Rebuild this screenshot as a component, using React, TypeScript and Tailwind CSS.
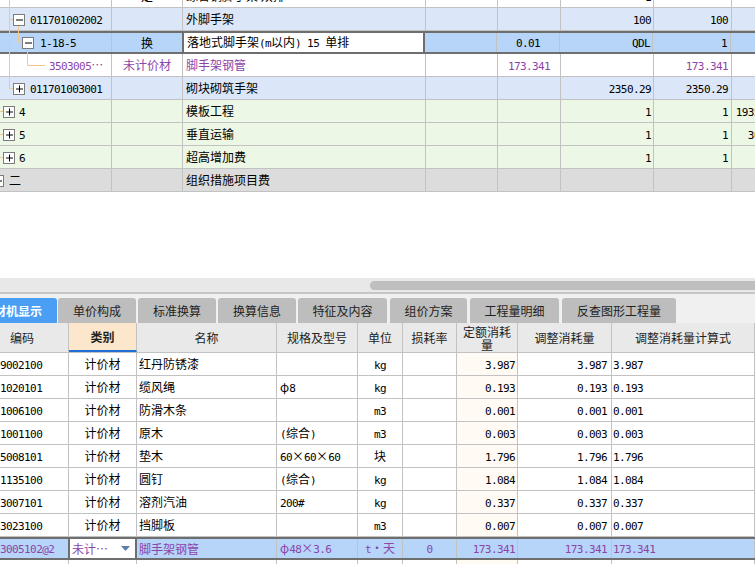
import React from "react";

const PURPLE = "text-[#8c44a8]";

const M = ({ children, className = "" }: { children: React.ReactNode; className?: string }) => (
  <span className={"font-['DejaVu_Sans_Mono'] text-[11px] tracking-[-0.6px] " + className}>{children}</span>
);

const TW = ["w-[112px]", "w-[71px]", "w-[243px]", "w-[72px]", "w-[63px]", "w-[93px]", "w-[78px]", "w-[55px]"];
const TA = [
  "justify-start",
  "justify-center",
  "justify-start pl-[3px]",
  "justify-center",
  "justify-center",
  "justify-end pr-[2px]",
  "justify-end pr-[3px]",
  "justify-end pr-[2px]",
];

type TopRowProps = {
  bg: string;
  cells: React.ReactNode[];
  pl0?: string;
  selected?: boolean;
  color?: string;
};

function TopRow({ bg, cells, pl0 = "", selected = false, color = "text-black" }: TopRowProps) {
  return (
    <div
      className={
        "flex h-[23px] shrink-0 " +
        bg +
        " " +
        color +
        " " +
        (selected ? "border-y-2 border-[#6e6e6e]" : "border-b border-[#c2c2c2]")
      }
    >
      {TW.map((w, i) => {
        const edit = selected && i === 2;
        return (
          <div
            key={i}
            className={
              "shrink-0 h-full flex items-center overflow-hidden whitespace-pre leading-none " +
              w +
              " " +
              TA[i] +
              " " +
              (i === 0 ? pl0 + " " : "") +
              (edit
                ? "bg-white border-x-2 border-[#6e6e6e] -ml-[1px]"
                : "border-r border-[#c2c2c2]")
            }
          >
            <span>{cells[i]}</span>
          </div>
        );
      })}
    </div>
  );
}

const Box = ({ x, y, plus }: { x: number; y: number; plus?: boolean }) => (
  <g>
    <rect x={x + 0.5} y={y + 0.5} width={11} height={11} fill="#fff" stroke="#7c7c7c" />
    <line x1={x + 3} y1={y + 6} x2={x + 10} y2={y + 6} stroke="#000" />
    {plus && <line x1={x + 6.5} y1={y + 2.5} x2={x + 6.5} y2={y + 9.5} stroke="#000" />}
  </g>
);

function TreeOverlay() {
  const c = "#f3c68c";
  return (
    <svg className="absolute left-0 top-0 pointer-events-none" width={60} height={192}>
      <line x1={9.5} y1={0} x2={9.5} y2={88.5} stroke={c} />
      <line x1={9.5} y1={19.5} x2={13} y2={19.5} stroke={c} />
      <line x1={9.5} y1={88.5} x2={13} y2={88.5} stroke={c} />
      <line x1={18.5} y1={25} x2={18.5} y2={42.5} stroke={c} />
      <line x1={18.5} y1={42.5} x2={22} y2={42.5} stroke={c} />
      <line x1={27.5} y1={48} x2={27.5} y2={65.5} stroke={c} />
      <line x1={27.5} y1={65.5} x2={45} y2={65.5} stroke={c} />
      <line x1={0} y1={111.5} x2={3} y2={111.5} stroke={c} />
      <line x1={0} y1={134.5} x2={3} y2={134.5} stroke={c} />
      <line x1={0} y1={157.5} x2={3} y2={157.5} stroke={c} />
      <Box x={13} y={14} />
      <Box x={22} y={37} />
      <Box x={13} y={83} plus />
      <Box x={3} y={106} plus />
      <Box x={3} y={129} plus />
      <Box x={3} y={152} plus />
      <Box x={-8} y={175} plus />
    </svg>
  );
}

const BW = ["w-[93px]", "w-[68px]", "w-[140px]", "w-[81px]", "w-[45px]", "w-[54px]", "w-[61px]", "w-[94px]", "w-[143px]"];
const BA = [
  "justify-start pl-[24px]",
  "justify-center",
  "justify-start pl-[2px]",
  "justify-start pl-[3px]",
  "justify-center",
  "justify-center",
  "justify-end pr-[2px]",
  "justify-end pr-[4px]",
  "justify-start pl-[1px]",
];

const materials: [string, string, React.ReactNode, string, string][] = [
  ["9002100", "红丹防锈漆", "", "kg", "3.987"],
  ["1020101", "缆风绳", <>φ<M>8</M></>, "kg", "0.193"],
  ["1006100", "防滑木条", "", "m3", "0.001"],
  ["1001100", "原木", <><M>(</M>综合<M>)</M></>, "m3", "0.003"],
  ["5008101", "垫木", <><M>60</M>×<M>60</M>×<M>60</M></>, "块", "1.796"],
  ["1135100", "圆钉", <><M>(</M>综合<M>)</M></>, "kg", "1.084"],
  ["3007101", "溶剂汽油", <M>200#</M>, "kg", "0.337"],
  ["3023100", "挡脚板", "", "m3", "0.007"],
];

function BottomRow({ cells, selected = false }: { cells: React.ReactNode[]; selected?: boolean }) {
  return (
    <div
      className={
        "flex h-[23px] shrink-0 " +
        (selected ? "bg-[#b6d5f8] border-y-2 border-[#6e6e6e] " + PURPLE : "bg-white border-b border-[#c2c2c2] text-black")
      }
    >
      {BW.map((w, i) => {
        const edit = selected && i === 1;
        return (
          <div
            key={i}
            className={
              "shrink-0 h-full flex items-center overflow-hidden whitespace-pre leading-none " +
              w +
              " " +
              BA[i] +
              " " +
              (edit
                ? "bg-white border-x-2 border-[#6e6e6e] -ml-[1px] w-[69px]"
                : "border-r border-[#c2c2c2] ") +
              (i === 6 && !selected ? " bg-[#fffaf3]" : "")
            }
          >
            {edit ? cells[i] : <span>{cells[i]}</span>}
          </div>
        );
      })}
    </div>
  );
}

const tabs: [string, string][] = [
  ["单价构成", "ml-[1px] w-[78px]"],
  ["标准换算", "ml-[2px] w-[78px]"],
  ["换算信息", "ml-[2px] w-[78px]"],
  ["特征及内容", "ml-[2px] w-[89px]"],
  ["组价方案", "ml-[3px] w-[77px]"],
  ["工程量明细", "ml-[3px] w-[89px]"],
  ["反查图形工程量", "ml-[3px] w-[114px]"],
];

export default function App() {
  return (
    <div className="w-[755px] h-[564px] overflow-hidden bg-white font-['Noto_Sans_CJK_SC',sans-serif] text-[12px] text-black flex flex-col">
      {/* top tree table */}
      <div className="relative h-[192px] shrink-0 overflow-hidden">
        <div className="flex flex-col -mt-[15px]">
          <TopRow
            bg="bg-white"
            cells={["", "定", "综合钢脚手架 双排", "", "", <M>1</M>, "", ""]}
          />
          <TopRow
            bg="bg-[#dbe7f9]"
            pl0="pl-[30px]"
            cells={[<M>011701002002</M>, "", "外脚手架", "", "", <M>100</M>, <M>100</M>, ""]}
          />
          <TopRow
            bg="bg-[#b6d5f8]"
            pl0="pl-[40px]"
            selected
            cells={[
              <M>1-18-5</M>,
              "换",
              <>
                落地式脚手架<M>(m</M>以内<M>) 15 </M>单排
              </>,
              "",
              <M>0.01</M>,
              <M>QDL</M>,
              <M>1</M>,
              "",
            ]}
          />
          <TopRow
            bg="bg-white"
            pl0="pl-[49px]"
            color={PURPLE}
            cells={[
              <>
                <M>3503005</M>…
              </>,
              "未计价材",
              "脚手架钢管",
              "",
              <M>173.341</M>,
              "",
              <M>173.341</M>,
              "",
            ]}
          />
          <TopRow
            bg="bg-[#dbe7f9]"
            pl0="pl-[30px]"
            cells={[<M>011701003001</M>, "", "砌块砌筑手架", "", "", <M>2350.29</M>, <M>2350.29</M>, ""]}
          />
          <TopRow
            bg="bg-[#ecf7e6]"
            pl0="pl-[19px]"
            cells={[<M>4</M>, "", "模板工程", "", "", <M>1</M>, <M>1</M>, <M>19352.69</M>]}
          />
          <TopRow
            bg="bg-[#ecf7e6]"
            pl0="pl-[19px]"
            cells={[<M>5</M>, "", "垂直运输", "", "", <M>1</M>, <M>1</M>, <M>367.50</M>]}
          />
          <TopRow
            bg="bg-[#ecf7e6]"
            pl0="pl-[19px]"
            cells={[<M>6</M>, "", "超高增加费", "", "", <M>1</M>, <M>1</M>, ""]}
          />
          <TopRow
            bg="bg-[#dcdcdc]"
            pl0="pl-[9px]"
            cells={["二", "", "组织措施项目费", "", "", "", "", ""]}
          />
        </div>
        <TreeOverlay />
      </div>

      {/* empty area */}
      <div className="h-[86px] shrink-0 bg-white" />

      {/* horizontal scrollbar */}
      <div className="h-[14px] shrink-0 bg-[#e8e8e8] flex items-center pl-[370px]">
        <div className="h-[9px] flex-1 rounded-l-full bg-[#bfbfbf]" />
      </div>
      <div className="h-[2px] shrink-0 bg-[#c6c6c6]" />

      {/* tab strip */}
      <div className="h-[29px] shrink-0 bg-[#f0f0f0] flex items-end">
        <div className="-ml-[33px] w-[90px] h-[25px] shrink-0 rounded-t-[3px] bg-[#4a9ff4] text-white font-bold flex items-center justify-center leading-none">
          人材机显示
        </div>
        {tabs.map(([t, c]) => (
          <div
            key={t}
            className={
              "h-[25px] rounded-t-[3px] bg-[#bdbdbd] text-[#222] flex items-center justify-center leading-none shrink-0 " + c
            }
          >
            {t}
          </div>
        ))}
      </div>

      {/* bottom table */}
      <div className="flex flex-col -ml-[24px]">
        <div className="flex h-[30px] shrink-0 bg-[#e9e9e9] text-[#222] border-b border-[#c2c2c2]">
          {["编码", "类别", "名称", "规格及型号", "单位", "损耗率", "定额消耗量", "调整消耗量", "调整消耗量计算式"].map(
            (h, i) => (
              <div
                key={h}
                className={
                  "shrink-0 h-full flex items-center justify-center text-center border-r border-[#c2c2c2] leading-[13px] " +
                  BW[i] +
                  (i === 1 ? " bg-[#fde7cc] font-bold border-b-2 border-b-[#1f6fd6]" : "")
                }
              >
                {i === 6 ? (
                  <span>
                    定额消耗
                    <br />量
                  </span>
                ) : (
                  h
                )}
              </div>
            )
          )}
        </div>
        {materials.map(([code, name, spec, unit, v]) => (
          <BottomRow
            key={code}
            cells={[
              <M>{code}</M>,
              "计价材",
              name,
              spec,
              /^[a-z0-9]+$/.test(unit) ? <M>{unit}</M> : unit,
              "",
              <M>{v}</M>,
              <M>{v}</M>,
              <M>{v}</M>,
            ]}
          />
        ))}
        <BottomRow
          selected
          cells={[
            <M>3005102@2</M>,
            <div className="flex items-center w-full pl-[2px]">
              <span className="flex-1">未计…</span>
              <svg width="9" height="6" className="mr-[5px]">
                <path d="M0 0 L9 0 L4.5 5 Z" fill="#5b7fa8" />
              </svg>
            </div>,
            "脚手架钢管",
            <>
              φ<M>48</M>×<M>3.6</M>
            </>,
            <>
              <M>t</M>・天
            </>,
            <M>0</M>,
            <M>173.341</M>,
            <M>173.341</M>,
            <M>173.341</M>,
          ]}
        />
        <BottomRow cells={["", "", "", "", "", "", "", "", ""]} />
      </div>
    </div>
  );
}
